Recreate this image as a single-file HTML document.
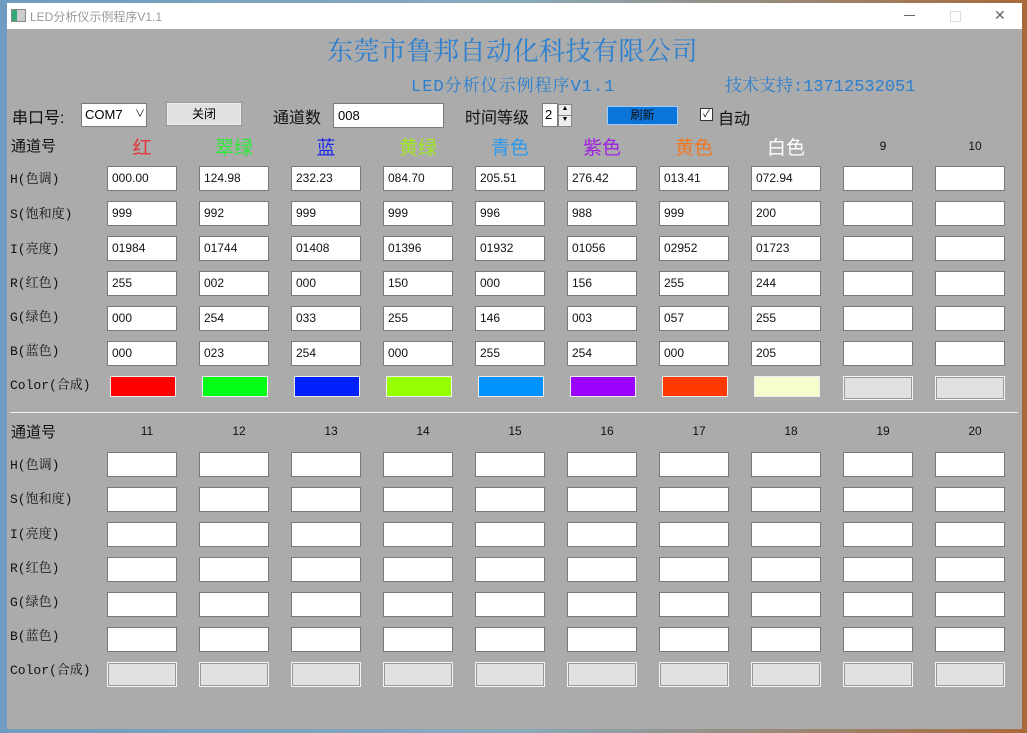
<!DOCTYPE html><html><head><meta charset="utf-8"><style>
body{margin:0;width:1027px;height:733px;overflow:hidden;background:linear-gradient(90deg,#6f9cc0,#8ab 50%,#a86a3a);position:relative;font-family:"Liberation Sans","Noto Sans CJK SC",sans-serif}
.win{position:absolute;left:7px;top:3px;width:1015px;height:726px;background:#ababab}
.tb{position:absolute;left:0;top:0;width:100%;height:26px;background:#fff;font-size:12px;color:#999}
.a{position:absolute;white-space:nowrap}
.col{position:absolute;top:163px;width:70px}
.in{width:68px;height:23px;border:1px solid #7a7a7a;background:#fff;margin-bottom:10px;font-size:12px;line-height:23px;text-indent:4px;color:#111}
.sw{width:64px;height:19px;border:1px solid #eee;margin:1px 3px}
.em{width:66px;height:21px;border:1px solid #f4f4f4;outline:1px solid #999;outline-offset:-2px;background:#e1e1e1;margin:0}
.lb{position:absolute;left:10px;font-family:"Liberation Mono","Noto Serif CJK SC",monospace;font-size:13px;color:#111}
.hd{position:absolute;top:133px;font-size:19px;width:70px;text-align:center}
.nm{position:absolute;font-size:12px;width:70px;text-align:center;color:#111}
</style></head><body>
<div class="win">
<div class="tb"><div class="a" style="left:4px;top:6px;width:13px;height:11px;border:1px solid #888;background:linear-gradient(90deg,#3a7 40%,#ccc 40%)"></div><div class="a" style="left:23px;top:5px">LED分析仪示例程序V1.1</div>
<div class="a" style="left:897px;top:12px;width:11px;height:1px;background:#666"></div>
<div class="a" style="left:943px;top:8px;width:9px;height:9px;border:1px solid #ddd"></div>
<div class="a" style="left:987px;top:4px;font-size:14px;color:#666">✕</div></div>
</div>
<div class="a" style="left:327px;top:31px;font-size:26px;color:#2a7fd0;font-family:'Noto Serif CJK SC',serif;letter-spacing:0.5px">东莞市鲁邦自动化科技有限公司</div>
<div class="a" style="left:411px;top:71px;font-size:17px;color:#2a7fd0;font-family:'Liberation Mono','Noto Serif CJK SC',monospace;letter-spacing:1px">LED分析仪示例程序V1.1</div>
<div class="a" style="left:725px;top:71px;font-size:17px;color:#2a7fd0;font-family:'Liberation Mono','Noto Serif CJK SC',monospace">技术支持:13712532051</div>
<div class="a" style="left:12px;top:104px;font-size:16px;color:#111">串口号:</div>
<div class="a" style="left:81px;top:103px;width:64px;height:22px;border:1px solid #7a7a7a;background:#fff;font-size:13px;line-height:22px;text-indent:3px">COM7 <span style="position:absolute;left:50px;font-size:10px">∨</span></div>
<div class="a" style="left:167px;top:103px;width:72px;height:20px;border:1px solid #eee;outline:1px solid #999;background:#e1e1e1;font-size:12px;text-align:center;line-height:20px">关闭</div>
<div class="a" style="left:273px;top:104px;font-size:16px;color:#111">通道数</div>
<div class="a" style="left:333px;top:103px;width:109px;height:23px;border:1px solid #7a7a7a;background:#fff;font-size:13px;line-height:23px;text-indent:4px">008</div>
<div class="a" style="left:465px;top:104px;font-size:16px;color:#111">时间等级</div>
<div class="a" style="left:542px;top:103px;width:14px;height:22px;border:1px solid #7a7a7a;background:#fff;font-size:13px;line-height:22px;text-indent:2px">2</div>
<div class="a" style="left:558px;top:104px;width:12px;height:10px;border:1px solid #888;background:#eee;font-size:7px;text-align:center">▲</div>
<div class="a" style="left:558px;top:115px;width:12px;height:10px;border:1px solid #888;background:#eee;font-size:7px;text-align:center">▼</div>
<div class="a" style="left:607px;top:106px;width:69px;height:17px;border:1px solid #9cf;background:#0a74d8;font-size:12px;text-align:center;line-height:17px;color:#111">刷新</div>
<div class="a" style="left:700px;top:108px;width:11px;height:11px;border:1px solid #333;background:#fff;font-size:10px;line-height:11px;text-align:center">✓</div>
<div class="a" style="left:718px;top:105px;font-size:16px;color:#111">自动</div>
<div class="a" style="left:10px;top:412px;width:1008px;height:1px;background:#f2f2f2"></div>

<div class="a" style="left:11px;top:135px;font-size:15px;color:#111">通道号</div>
<div class="a" style="left:11px;top:421px;font-size:15px;color:#111">通道号</div>
<div class="lb" style="top:168px">H(色调)</div><div class="lb" style="top:203px">S(饱和度)</div><div class="lb" style="top:238px">I(亮度)</div><div class="lb" style="top:272px">R(红色)</div><div class="lb" style="top:306px">G(绿色)</div><div class="lb" style="top:340px">B(蓝色)</div><div class="lb" style="top:374px">Color(合成)</div>
<div class="lb" style="top:454px">H(色调)</div><div class="lb" style="top:488px">S(饱和度)</div><div class="lb" style="top:523px">I(亮度)</div><div class="lb" style="top:557px">R(红色)</div><div class="lb" style="top:591px">G(绿色)</div><div class="lb" style="top:625px">B(蓝色)</div><div class="lb" style="top:659px">Color(合成)</div>

<div class="hd" style="left:107px;color:#e8353a">红</div>
<div class="hd" style="left:199px;color:#2ee83a">翠绿</div>
<div class="hd" style="left:291px;color:#1c28e8">蓝</div>
<div class="hd" style="left:383px;color:#a0e820">黄绿</div>
<div class="hd" style="left:475px;color:#2a9af0">青色</div>
<div class="hd" style="left:567px;color:#a020e0">紫色</div>
<div class="hd" style="left:659px;color:#f07820">黄色</div>
<div class="hd" style="left:751px;color:#fff">白色</div>
<div class="nm" style="left:848px;top:139px">9</div><div class="nm" style="left:940px;top:139px">10</div>
<div class="nm" style="left:112px;top:424px">11</div><div class="nm" style="left:204px;top:424px">12</div><div class="nm" style="left:296px;top:424px">13</div><div class="nm" style="left:388px;top:424px">14</div><div class="nm" style="left:480px;top:424px">15</div><div class="nm" style="left:572px;top:424px">16</div><div class="nm" style="left:664px;top:424px">17</div><div class="nm" style="left:756px;top:424px">18</div><div class="nm" style="left:848px;top:424px">19</div><div class="nm" style="left:940px;top:424px">20</div>

<div class="col" style="left:107px;top:166px"><div class="in">000.00</div><div class="in">999</div><div class="in">01984</div><div class="in">255</div><div class="in">000</div><div class="in">000</div><div class="sw" style="background:#ff0000"></div></div>
<div class="col" style="left:199px;top:166px"><div class="in">124.98</div><div class="in">992</div><div class="in">01744</div><div class="in">002</div><div class="in">254</div><div class="in">023</div><div class="sw" style="background:#02fe17"></div></div>
<div class="col" style="left:291px;top:166px"><div class="in">232.23</div><div class="in">999</div><div class="in">01408</div><div class="in">000</div><div class="in">033</div><div class="in">254</div><div class="sw" style="background:#0021fe"></div></div>
<div class="col" style="left:383px;top:166px"><div class="in">084.70</div><div class="in">999</div><div class="in">01396</div><div class="in">150</div><div class="in">255</div><div class="in">000</div><div class="sw" style="background:#96ff00"></div></div>
<div class="col" style="left:475px;top:166px"><div class="in">205.51</div><div class="in">996</div><div class="in">01932</div><div class="in">000</div><div class="in">146</div><div class="in">255</div><div class="sw" style="background:#0092ff"></div></div>
<div class="col" style="left:567px;top:166px"><div class="in">276.42</div><div class="in">988</div><div class="in">01056</div><div class="in">156</div><div class="in">003</div><div class="in">254</div><div class="sw" style="background:#9c03fe"></div></div>
<div class="col" style="left:659px;top:166px"><div class="in">013.41</div><div class="in">999</div><div class="in">02952</div><div class="in">255</div><div class="in">057</div><div class="in">000</div><div class="sw" style="background:#ff3900"></div></div>
<div class="col" style="left:751px;top:166px"><div class="in">072.94</div><div class="in">200</div><div class="in">01723</div><div class="in">244</div><div class="in">255</div><div class="in">205</div><div class="sw" style="background:#f4ffcd"></div></div>
<div class="col" style="left:843px;top:166px"><div class="in"></div><div class="in"></div><div class="in"></div><div class="in"></div><div class="in"></div><div class="in"></div><div class="sw em" style="width:68px;height:22px"></div></div>
<div class="col" style="left:935px;top:166px"><div class="in"></div><div class="in"></div><div class="in"></div><div class="in"></div><div class="in"></div><div class="in"></div><div class="sw em" style="width:68px;height:22px"></div></div>

<div class="col" style="left:107px;top:452px"><div class="in"></div><div class="in"></div><div class="in"></div><div class="in"></div><div class="in"></div><div class="in"></div><div class="sw em" style="width:68px;height:23px"></div></div>
<div class="col" style="left:199px;top:452px"><div class="in"></div><div class="in"></div><div class="in"></div><div class="in"></div><div class="in"></div><div class="in"></div><div class="sw em" style="width:68px;height:23px"></div></div>
<div class="col" style="left:291px;top:452px"><div class="in"></div><div class="in"></div><div class="in"></div><div class="in"></div><div class="in"></div><div class="in"></div><div class="sw em" style="width:68px;height:23px"></div></div>
<div class="col" style="left:383px;top:452px"><div class="in"></div><div class="in"></div><div class="in"></div><div class="in"></div><div class="in"></div><div class="in"></div><div class="sw em" style="width:68px;height:23px"></div></div>
<div class="col" style="left:475px;top:452px"><div class="in"></div><div class="in"></div><div class="in"></div><div class="in"></div><div class="in"></div><div class="in"></div><div class="sw em" style="width:68px;height:23px"></div></div>
<div class="col" style="left:567px;top:452px"><div class="in"></div><div class="in"></div><div class="in"></div><div class="in"></div><div class="in"></div><div class="in"></div><div class="sw em" style="width:68px;height:23px"></div></div>
<div class="col" style="left:659px;top:452px"><div class="in"></div><div class="in"></div><div class="in"></div><div class="in"></div><div class="in"></div><div class="in"></div><div class="sw em" style="width:68px;height:23px"></div></div>
<div class="col" style="left:751px;top:452px"><div class="in"></div><div class="in"></div><div class="in"></div><div class="in"></div><div class="in"></div><div class="in"></div><div class="sw em" style="width:68px;height:23px"></div></div>
<div class="col" style="left:843px;top:452px"><div class="in"></div><div class="in"></div><div class="in"></div><div class="in"></div><div class="in"></div><div class="in"></div><div class="sw em" style="width:68px;height:23px"></div></div>
<div class="col" style="left:935px;top:452px"><div class="in"></div><div class="in"></div><div class="in"></div><div class="in"></div><div class="in"></div><div class="in"></div><div class="sw em" style="width:68px;height:23px"></div></div>
</body></html>
